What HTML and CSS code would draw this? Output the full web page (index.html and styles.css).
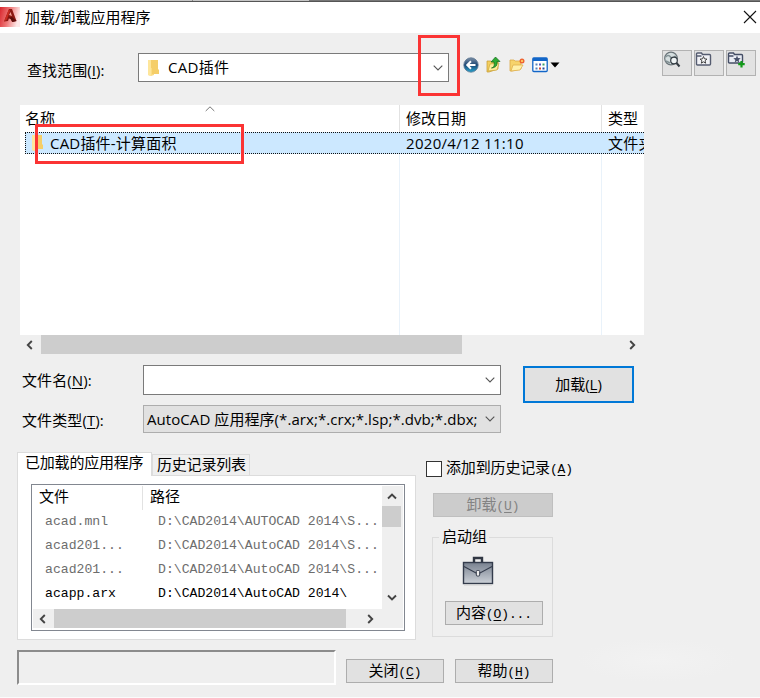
FILE: index.html
```html
<!DOCTYPE html>
<html lang="zh-CN">
<head>
<meta charset="utf-8">
<title>加载/卸载应用程序</title>
<link rel="stylesheet" href="styles.css">
</head>
<body>
<div class="dialog">
  <div class="backdrop-edge"><i></i><b></b></div>
  <header class="titlebar">
    <svg class="app-icon" width="20" height="20" viewBox="0 0 20 20">
      <defs><linearGradient id="red" x1="0" y1="0" x2="1" y2="0.25"><stop offset="0" stop-color="#d9252c"/><stop offset=".5" stop-color="#ee7777"/><stop offset="1" stop-color="#fde8e8"/></linearGradient></defs>
      <rect width="20" height="20" fill="url(#red)"/>
      <path d="M4 14.500 9 2h3l4.500 12-4.500 1-1.500-4H9l-1 3z" fill="#8c1712"/><path d="m9 8 1.500-3L12 9z" fill="#f0a096"/><path d="m4 14.500 5-12.500 1 2-3 8.500z" fill="#c92a20"/><path d="m8 11 4-1 4.500 4-4 1-2-3z" fill="#5b0d0a"/>
    </svg>
    <h1>加载/卸载应用程序</h1>
    <svg class="close" width="14" height="14" viewBox="0 0 14 14"><path d="M1 1 13 13M13 1 1 13" stroke="#111" stroke-width="1.1"/></svg>
  </header>

  <section class="lookin">
    <label>查找范围(<u>I</u>):</label>
    <div class="combo">
      <svg class="folder" width="13" height="18" viewBox="0 0 13 18"><path d="M1 1h6v15l-3 1-3-1z" fill="#fbdc83"/><path d="M4 1h7v9l1 1v4H5V9H4z" fill="#f5ce69"/><path d="M1 1h3v16l-3-1z" fill="#fee69b"/></svg>
      <span>CAD插件</span>
      <svg class="chev" width="10" height="6" viewBox="0 0 10 6"><path d="m.7.7 4.3 4.3L9.3.7" fill="none" stroke="#555" stroke-width="1.1"/></svg>
      <div class="mark mark-drop"></div>
    </div>
    <div class="nav">
      <svg width="16" height="16" viewBox="0 0 16 16"><defs><linearGradient id="blu" x1="0" y1="0" x2="0" y2="1"><stop offset="0" stop-color="#7d8fa5"/><stop offset=".5" stop-color="#1c4774"/><stop offset="1" stop-color="#27a5cf"/></linearGradient></defs><circle cx="8" cy="8" r="7.2" fill="url(#blu)" stroke="#5a7590" stroke-width=".8"/><path d="M12.5 8H4.5M8 4.3 4.2 8 8 11.7" fill="none" stroke="#fff" stroke-width="1.9"/></svg>
      <svg width="15" height="17" viewBox="0 0 15 17"><path d="M1 5h4l1 1h6v7L3 16H1z" fill="#f3cf60" stroke="#c49a32" stroke-width=".7"/><path d="m2 15 2-7 9-1-2 7z" fill="#ffed9b" stroke="#cda53b" stroke-width=".7"/><path d="M5.500 12c3-1 3-3 2.500-6H5l4.500-5L14 5.500h-3c.5 4-1 6-5.500 6.500z" fill="#2eac32" stroke="#12681b" stroke-width=".7"/></svg>
      <svg width="17" height="15" viewBox="0 0 17 15"><path d="M1 3h4l1 1h6v8l-9 2H1z" fill="#f6d36b" stroke="#dca947" stroke-width=".8"/><path d="m2 14 2-6h10l-3 5z" fill="#fff0a9" stroke="#dfb04c" stroke-width=".8"/><circle cx="13" cy="4" r="2.500" fill="#ef6330"/><circle cx="13" cy="4" r="1" fill="#ffe06a"/></svg>
      <svg width="28" height="16" viewBox="0 0 28 16"><rect x=".8" y="1" width="14.400" height="13.500" rx="1" fill="#fff" stroke="#1266c8" stroke-width="1.3"/><path d="M1 2.500h14" stroke="#1266c8" stroke-width="3"/><path d="M3.500 6.500h2v2h-2zM3.500 10.500h2v2h-2z" fill="#5582bc"/><path d="M7 6.500h2v2H7z" fill="#55b"/><path d="M7 10.500h2v2H7z" fill="#d34b30"/><path d="M10.500 6.500h2v2h-2z" fill="#38a169"/><path d="M10.500 10.500h2v2h-2z" fill="#23479c"/><path d="M18.500 5.500h9L23 10.500z" fill="#000"/></svg>
    </div>
    <div class="tools">
      <span><svg width="18" height="18" viewBox="0 0 18 18"><circle cx="8" cy="7.500" r="6.300" fill="#d5dedf" stroke="#6b757a" stroke-width="1.200"/><path d="M2.500 6q3-3 5 0t5-1M3 10l4 2" fill="none" stroke="#839195" stroke-width="1.600"/><circle cx="11" cy="9.500" r="3.300" fill="#eef3f4" stroke="#333b42" stroke-width="1.200"/><path d="m13.500 12 3 3.500" stroke="#333b42" stroke-width="2"/></svg></span>
      <span><svg width="18" height="18" viewBox="0 0 18 18"><path d="M1.500 13V3q0-1 1-1h4l1 1.500h7q1 0 1 1V13q0 1-1 1h-12q-1 0-1-1zM1.500 5h5" fill="#f0f1f5" stroke="#555c70" stroke-width="1.400"/><path d="m8.500 5.500 1 2.400 2.500.2-2 1.600.7 2.500-2.200-1.400-2.200 1.400.7-2.500-2-1.600 2.500-.2z" fill="#fff" stroke="#444" stroke-width="1"/></svg></span>
      <span><svg width="18" height="18" viewBox="0 0 18 18"><path d="M1.500 11V3q0-1 1-1h4l1 1.500h7q1 0 1 1V11q0 1-1 1h-12q-1 0-1-1zM1.500 5h5" fill="#e9ecf4" stroke="#454e66" stroke-width="1.400"/><path d="m10 4.500 1 2.500 2.700.2-2 1.700.6 2.600-2.300-1.400-2.300 1.400.6-2.600-2-1.700L9 7z" fill="#48516b"/><path d="M14.500 10v6.500M11.200 13.200h6.500" stroke="#129a18" stroke-width="2.200"/></svg></span>
    </div>
  </section>

  <section class="files">
    <div class="file-head"><span>名称<svg class="sort" width="10" height="6" viewBox="0 0 10 6"><path d="M.7 5 5 .8 9.300 5" fill="none" stroke="#777"/></svg></span><span>修改日期</span><span>类型</span></div>
    <div class="file-body">
      <div class="file-row">
        <span><svg class="folder" width="13" height="18" viewBox="0 0 13 18"><path d="M1 1h6v15l-3 1-3-1z" fill="#fbdc83"/><path d="M4 1h7v9l1 1v4H5V9H4z" fill="#f5ce69"/><path d="M1 1h3v16l-3-1z" fill="#fee69b"/></svg>CAD插件-计算面积</span><span class="date">2020/4/12 11:10</span><span>文件夹</span>
      </div>
      <div class="file-space"><i></i><i></i><i></i></div>
    </div>
    <div class="mark mark-file"></div>
  </section>
  <div class="hscroll">
    <svg width="9" height="10" viewBox="0 0 9 10"><path d="M6.800 1 2.800 5l4 4" fill="none" stroke="#444" stroke-width="1.900"/></svg>
    <i></i>
    <svg width="9" height="10" viewBox="0 0 9 10"><path d="m2.200 1 4 4-4 4" fill="none" stroke="#444" stroke-width="1.900"/></svg>
  </div>

  <section class="naming">
    <div class="fields">
      <label>文件名(<u>N</u>):</label>
      <div class="combo name"><svg class="chev" width="10" height="6" viewBox="0 0 10 6"><path d="m.7.7 4.300 4.300L9.300.7" fill="none" stroke="#555" stroke-width="1.100"/></svg></div>
      <label>文件类型(<u>T</u>):</label>
      <div class="combo type"><span>AutoCAD 应用程序(*.arx;*.crx;*.lsp;*.dvb;*.dbx;</span><svg class="chev" width="10" height="6" viewBox="0 0 10 6"><path d="m.7.7 4.300 4.300L9.300.7" fill="none" stroke="#555" stroke-width="1.100"/></svg></div>
    </div>
    <button class="load">加载(<u>L</u>)</button>
  </section>

  <section class="lower">
    <div class="tabs">
      <div class="tabstrip"><span class="tab active">已加载的应用程序</span><span class="tab">历史记录列表</span></div>
      <div class="panel">
        <div class="loaded">
          <div class="rows">
            <div class="row head"><span>文件</span><span>路径</span></div>
            <div class="row"><span>acad.mnl</span><span>D:\CAD2014\AUTOCAD 2014\S...</span></div>
            <div class="row"><span>acad201...</span><span>D:\CAD2014\AutoCAD 2014\S...</span></div>
            <div class="row"><span>acad201...</span><span>D:\CAD2014\AutoCAD 2014\S...</span></div>
            <div class="row on"><span>acapp.arx</span><span>D:\CAD2014\AutoCAD 2014\</span></div>
          </div>
          <div class="vscroll">
            <svg width="10" height="9" viewBox="0 0 10 9"><path d="m1 6.500 4-4 4 4" fill="none" stroke="#444" stroke-width="1.900"/></svg>
            <i></i>
            <svg width="10" height="9" viewBox="0 0 10 9"><path d="m1 2.500 4 4 4-4" fill="none" stroke="#444" stroke-width="1.900"/></svg>
          </div>
          <div class="inner-scroll">
            <svg width="9" height="10" viewBox="0 0 9 10"><path d="M6.800 1 2.800 5l4 4" fill="none" stroke="#444" stroke-width="1.900"/></svg>
            <i></i>
            <svg width="9" height="10" viewBox="0 0 9 10"><path d="m2.200 1 4 4-4 4" fill="none" stroke="#444" stroke-width="1.900"/></svg>
          </div>
        </div>
      </div>
    </div>
    <div class="side">
      <div class="check"><i></i>添加到历史记录<span class="m">(<u>A</u>)</span></div>
      <button class="btn disabled">卸载<span class="m">(<u>U</u>)</span></button>
      <fieldset>
        <legend>启动组</legend>
        <svg width="32" height="30" viewBox="0 0 32 30"><defs><linearGradient id="case" x1="0" y1="0" x2="0" y2="1"><stop offset="0" stop-color="#78818f"/><stop offset="1" stop-color="#ccd1d8"/></linearGradient></defs><path d="M12 6V2h8v4" fill="none" stroke="#303743" stroke-width="2.400"/><rect x="1.500" y="6.500" width="29" height="21" fill="url(#case)" stroke="#343c4c" stroke-width="1.400"/><path d="M2 10.500 14 17h4l12-6.500" fill="none" stroke="#343c4c" stroke-width="1.100"/><rect x="14.300" y="14.500" width="3.400" height="5.500" rx="1" fill="#eee" stroke="#343c4c"/><path d="M2 29h28" stroke="#cfcfcf"/></svg>
        <button class="btn">内容<span class="m">(<u>O</u>)...</span></button>
      </fieldset>
    </div>
  </section>

  <footer>
    <div class="status"></div>
    <button class="btn">关闭<span class="m">(<u>C</u>)</span></button>
    <button class="btn">帮助<span class="m">(<u>H</u>)</span></button>
    <div class="glow"></div>
  </footer>
</div>
</body>
</html>
```
FILE: styles.css
```css
* { box-sizing: border-box; }
body { margin: 0; }
svg { display: block; flex: none; }
button { font: inherit; padding: 0; border-radius: 0; color: #000; white-space: nowrap; }
u { text-decoration-thickness: 1px; text-underline-offset: 2px; }
.dialog {
  width: 760px; height: 698px; overflow: hidden;
  display: flex; flex-direction: column;
  background: #efefef; border-bottom: 1px solid #fbfbfb;
  color: #000; font: 15px/20px "Open Sans", "Noto Sans CJK SC", sans-serif;
}
.backdrop-edge { display: flex; height: 2px; background: #777; border-bottom: 1px solid #555; }
.backdrop-edge i { width: 193px; background: #c5c5c5; border-right: 1px solid #888; }
.backdrop-edge b { width: 116px; background: #c5c5c5; }

.titlebar { height: 31px; background: #fff; display: flex; align-items: center; padding: 0 3px 2px 0; }
.app-icon { margin-top: 1px; }
h1 { font: inherit; margin: 0 auto 0 5px; }

.lookin { height: 72px; display: flex; align-items: flex-start; }
.lookin > label { width: 138px; padding: 27px 0 0 27px; letter-spacing: .05px; }
.combo { position: relative; display: flex; align-items: center; background: #fff; border: 1px solid #7a7a7a; white-space: nowrap; }
.lookin .combo { width: 311px; height: 29px; margin-top: 20px; padding: 0 5px 0 8px; }
.lookin .combo span { margin: -1px 0 0 8px; letter-spacing: .3px; }
.chev { margin-left: auto; }
.mark { position: absolute; border: 3px solid #fb3434; }
.mark-drop { left: 279px; top: -19px; width: 42px; height: 61px; }
.nav { display: flex; align-items: center; height: 18px; margin: 23px 0 0 14px; }
.nav svg:nth-child(2) { margin: -2px 0 0 7px; }
.nav svg:nth-child(3) { margin: -1px 0 0 8px; }
.nav svg:nth-child(4) { margin-left: 6px; }
.tools { display: flex; gap: 2px; margin: 17px 4px 0 auto; }
.tools span { width: 30px; height: 26px; border: 1px solid #b2b2b2; background: #e2e2e2; }

.files { position: relative; width: 624px; height: 230px; margin-left: 20px; background: #fff; }
.file-head, .file-row, .file-space { display: grid; grid-template-columns: 380px 202px 1fr; }
.file-head { height: 27px; }
.file-head span { border-right: 1px solid #e2e2e2; padding: 3px 0 0 6px; }
.file-head span:first-child { position: relative; padding-left: 5px; }
.file-head span:last-child, .file-space i:last-child { border: 0; }
.sort { position: absolute; left: 185px; top: 1px; }
.file-row { height: 22px; margin-left: 5px; grid-template-columns: 375px 202px 42px; background: #cce8ff; border: 1px dotted #111; border-right: 0; overflow: hidden; white-space: nowrap; }
.file-row span { display: flex; align-items: center; height: 20px; padding-left: 5px; overflow: hidden; letter-spacing: .2px; }
.file-row .folder { margin: 0 6px 0 0; }
.file-row .date { letter-spacing: .31px; }
.file-space { height: 181px; }
.file-space i { border-right: 1px solid #e9f2fa; }
.mark-file { left: 15px; top: 19px; width: 209px; height: 40px; }
.hscroll { width: 624px; height: 19px; margin-left: 20px; display: flex; align-items: center; padding: 0 7px 0 5px; }
.hscroll i { width: 421px; height: 19px; background: #cdcdcd; margin: 0 auto 0 7px; }

.naming { display: flex; height: 98px; padding-top: 11px; }
.fields { display: grid; grid-template-columns: 121px 358px; grid-template-rows: 30px 28px; row-gap: 10px; margin-left: 22px; height: 68px; }
.fields label { padding-top: 5px; letter-spacing: .1px; }
.combo.name, .combo.type { padding: 0 5px 0 3px; }
.combo.type { background: #e1e1e1; border-color: #adadad; }
.combo.type span { letter-spacing: .07px; }
.load { width: 111px; height: 37px; margin: 1px 0 0 22px; padding-bottom: 2px; background: #e1e1e1; border: 2px solid #0078d7; }

.lower { display: flex; height: 188px; font-family: "Liberation Mono", "Noto Sans CJK SC", monospace; }
.m { font-size: 13px; }
.tabs { width: 399px; margin-left: 17px; }
.tabstrip { display: flex; align-items: flex-end; height: 23px; white-space: nowrap; }
.tab { height: 21px; border: 1px solid #dcdcdc; border-bottom: 0; width: 98px; padding-left: 4px; line-height: 23px; letter-spacing: -.2px; }
.tab.active { position: relative; width: 135px; height: 24px; margin-bottom: -1px; padding-left: 7px; background: #fff; }
.panel { height: 165px; background: #fff; border: 1px solid #dcdcdc; padding: 8px 0 0 13px; }
.loaded { width: 374px; height: 147px; border: 1px solid #828790; padding: 1px; display: grid; grid-template: 123px 19px / 1fr 21px; }
.rows { overflow: hidden; }
.row { display: flex; height: 24px; line-height: 24px; font-size: 13.15px; color: #6d6d6d; white-space: pre; }
.row span:first-child { width: 112px; padding-left: 12px; }
.row span + span { padding-left: 13px; }
.row.head { font-size: 15px; color: #000; line-height: 26px; }
.row.head span:first-child { width: 110px; padding-left: 6px; border-right: 1px solid #e2e2e2; }
.row.head span + span { padding-left: 7px; }
.row.on { color: #000; }
.vscroll { background: #efefef; display: flex; flex-direction: column; align-items: center; padding: 6px 2px 7px 0; }
.vscroll i { width: 19px; height: 21px; background: #cdcdcd; margin: 5px 0 auto; }
.inner-scroll { grid-column: 1 / 3; display: flex; align-items: center; background: #efefef; padding: 0 28px 0 5px; }
.inner-scroll i { width: 292px; height: 19px; background: #cdcdcd; margin: 0 auto 0 7px; }

.side { margin-left: 10px; width: 155px; padding-top: 6px; white-space: nowrap; }
.check { display: flex; align-items: center; height: 22px; letter-spacing: -.15px; padding-top: 1px; }
.check i { width: 16px; height: 16px; border: 1px solid #333; background: #fff; margin: -1px 4px 0 0; }
.btn { background: #e1e1e1; border: 1px solid #adadad; height: 24px; display: flex; align-items: center; justify-content: center; padding-top: 3px; letter-spacing: -.1px; }
.disabled { width: 120px; margin: 13px 0 0 7px; background: #ccc; border-color: #bfbfbf; color: #838383; }
fieldset { margin: 10px 0 0 6px; padding: 0 9px 0 12px; width: 121px; height: 110px; border: 1px solid #dcdcdc; min-width: 0; }
legend { margin-left: -6px; padding: 2px 2px 0 3px; height: 20px; line-height: 20px; }
fieldset svg { margin: 9px 0 0 17px; }
fieldset .btn { width: 98px; margin-top: 15px; }

footer { display: flex; padding: 10px 0 0 17px; font-family: "Liberation Mono", "Noto Sans CJK SC", monospace; }
.status { width: 319px; height: 35px; border: 2px solid; border-color: #8c8c8c #fff #fff #8c8c8c; }
footer .btn { width: 98px; margin: 9px 0 0 10px; }
footer .btn + .btn { margin-left: 11px; }
.glow { width: 160px; height: 44px; margin: -12px 0 0 24px; background: radial-gradient(closest-side, #f2f2f2, #efefef); }
```
